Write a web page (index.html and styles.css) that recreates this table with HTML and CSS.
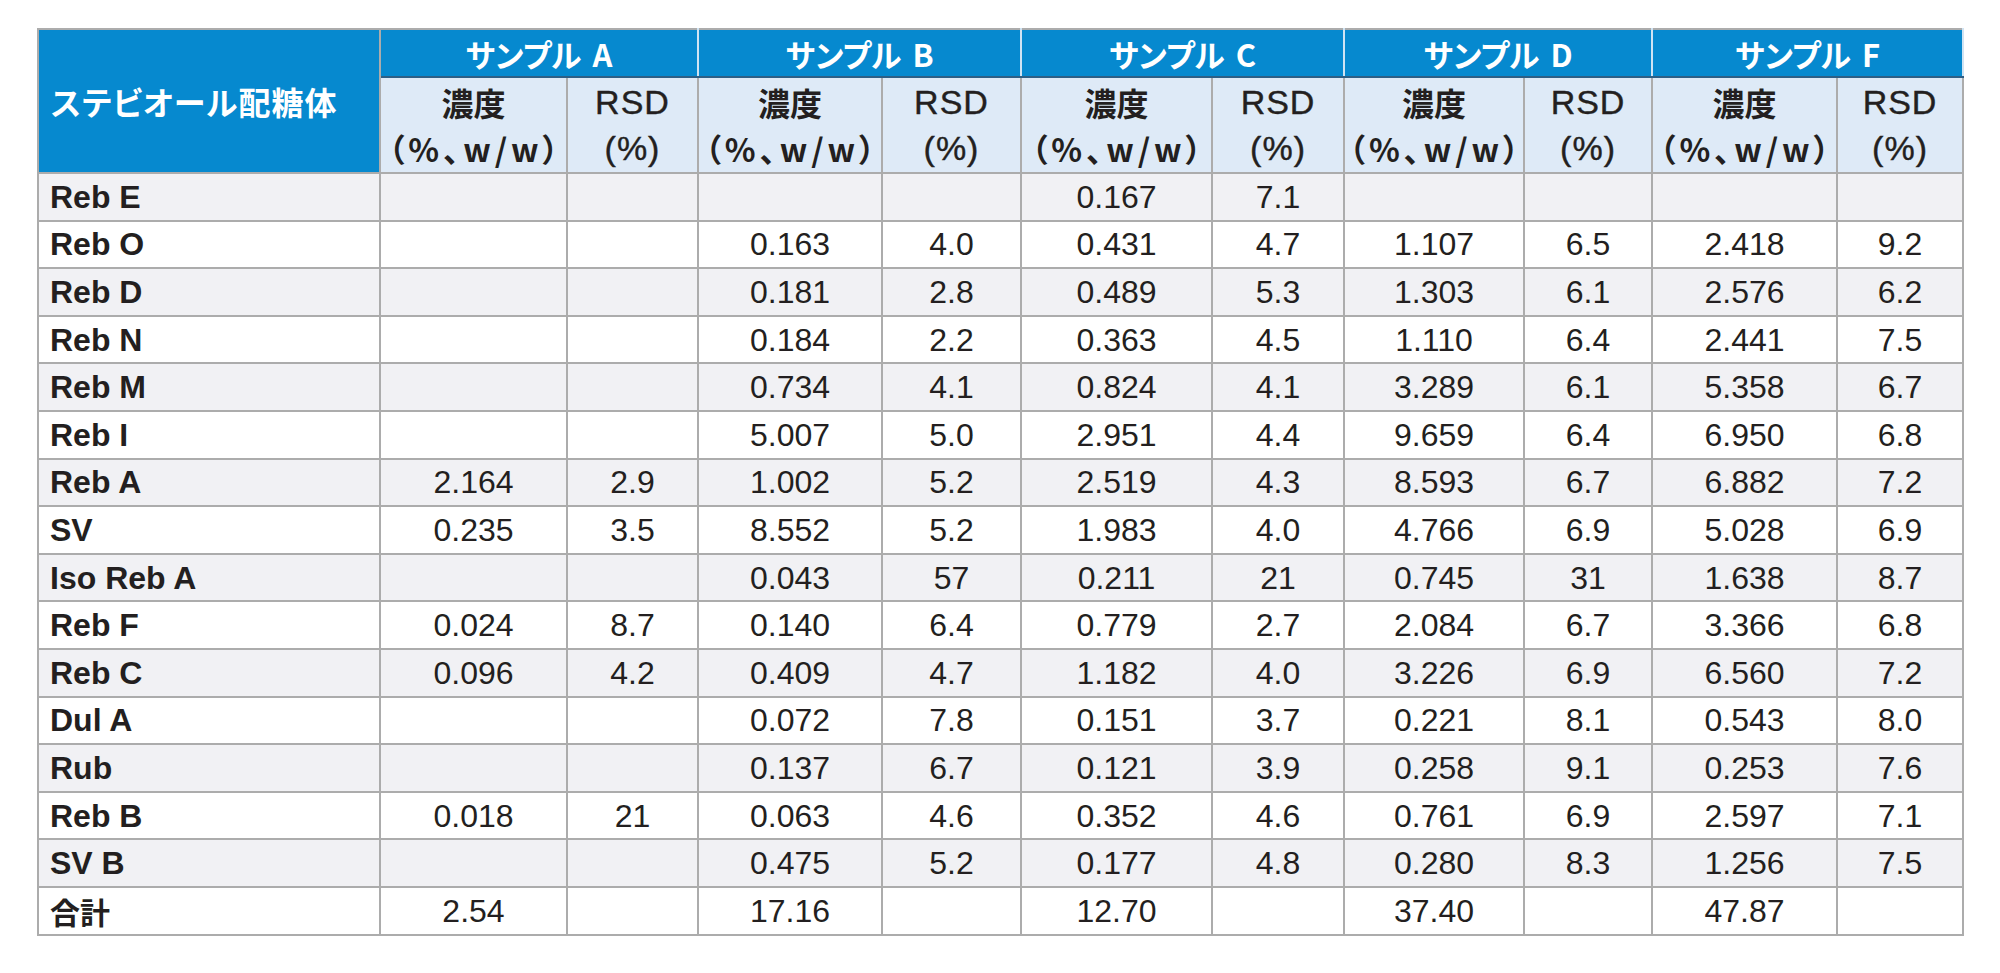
FILE: index.html
```html
<!DOCTYPE html>
<html lang="ja">
<head>
<meta charset="utf-8">
<title>ステビオール配糖体</title>
<link rel="stylesheet" href="styles.css">
</head>
<body>
<div class="page">
<table class="data">
<colgroup>
<col class="c-name"><col class="c-a1"><col class="c-a2"><col class="c-b1"><col class="c-b2"><col class="c-c1"><col class="c-c2"><col class="c-d1"><col class="c-d2"><col class="c-f1"><col class="c-f2">
</colgroup>
<thead>
<tr class="h1">
<th class="corner" rowspan="2">ステビオール配糖体</th>
<th class="sample" colspan="2">サンプル A</th>
<th class="sample" colspan="2">サンプル B</th>
<th class="sample" colspan="2">サンプル C</th>
<th class="sample" colspan="2">サンプル D</th>
<th class="sample" colspan="2">サンプル F</th>
</tr>
<tr class="h2">
<th class="sub"><span class="jp">濃度</span><br><span class="unit">（%、w/w）</span></th><th class="sub rsd">RSD<br>(%)</th>
<th class="sub"><span class="jp">濃度</span><br><span class="unit">（%、w/w）</span></th><th class="sub rsd">RSD<br>(%)</th>
<th class="sub"><span class="jp">濃度</span><br><span class="unit">（%、w/w）</span></th><th class="sub rsd">RSD<br>(%)</th>
<th class="sub"><span class="jp">濃度</span><br><span class="unit">（%、w/w）</span></th><th class="sub rsd">RSD<br>(%)</th>
<th class="sub"><span class="jp">濃度</span><br><span class="unit">（%、w/w）</span></th><th class="sub rsd">RSD<br>(%)</th>
</tr>
</thead>
<tbody>
<tr><th>Reb E</th><td></td><td></td><td></td><td></td><td>0.167</td><td>7.1</td><td></td><td></td><td></td><td></td></tr>
<tr><th>Reb O</th><td></td><td></td><td>0.163</td><td>4.0</td><td>0.431</td><td>4.7</td><td>1.107</td><td>6.5</td><td>2.418</td><td>9.2</td></tr>
<tr><th>Reb D</th><td></td><td></td><td>0.181</td><td>2.8</td><td>0.489</td><td>5.3</td><td>1.303</td><td>6.1</td><td>2.576</td><td>6.2</td></tr>
<tr><th>Reb N</th><td></td><td></td><td>0.184</td><td>2.2</td><td>0.363</td><td>4.5</td><td>1.110</td><td>6.4</td><td>2.441</td><td>7.5</td></tr>
<tr><th>Reb M</th><td></td><td></td><td>0.734</td><td>4.1</td><td>0.824</td><td>4.1</td><td>3.289</td><td>6.1</td><td>5.358</td><td>6.7</td></tr>
<tr><th>Reb I</th><td></td><td></td><td>5.007</td><td>5.0</td><td>2.951</td><td>4.4</td><td>9.659</td><td>6.4</td><td>6.950</td><td>6.8</td></tr>
<tr><th>Reb A</th><td>2.164</td><td>2.9</td><td>1.002</td><td>5.2</td><td>2.519</td><td>4.3</td><td>8.593</td><td>6.7</td><td>6.882</td><td>7.2</td></tr>
<tr><th>SV</th><td>0.235</td><td>3.5</td><td>8.552</td><td>5.2</td><td>1.983</td><td>4.0</td><td>4.766</td><td>6.9</td><td>5.028</td><td>6.9</td></tr>
<tr><th>Iso Reb A</th><td></td><td></td><td>0.043</td><td>57</td><td>0.211</td><td>21</td><td>0.745</td><td>31</td><td>1.638</td><td>8.7</td></tr>
<tr><th>Reb F</th><td>0.024</td><td>8.7</td><td>0.140</td><td>6.4</td><td>0.779</td><td>2.7</td><td>2.084</td><td>6.7</td><td>3.366</td><td>6.8</td></tr>
<tr><th>Reb C</th><td>0.096</td><td>4.2</td><td>0.409</td><td>4.7</td><td>1.182</td><td>4.0</td><td>3.226</td><td>6.9</td><td>6.560</td><td>7.2</td></tr>
<tr><th>Dul A</th><td></td><td></td><td>0.072</td><td>7.8</td><td>0.151</td><td>3.7</td><td>0.221</td><td>8.1</td><td>0.543</td><td>8.0</td></tr>
<tr><th>Rub</th><td></td><td></td><td>0.137</td><td>6.7</td><td>0.121</td><td>3.9</td><td>0.258</td><td>9.1</td><td>0.253</td><td>7.6</td></tr>
<tr><th>Reb B</th><td>0.018</td><td>21</td><td>0.063</td><td>4.6</td><td>0.352</td><td>4.6</td><td>0.761</td><td>6.9</td><td>2.597</td><td>7.1</td></tr>
<tr><th>SV B</th><td></td><td></td><td>0.475</td><td>5.2</td><td>0.177</td><td>4.8</td><td>0.280</td><td>8.3</td><td>1.256</td><td>7.5</td></tr>
<tr><th class="jp-name">合計</th><td>2.54</td><td></td><td>17.16</td><td></td><td>12.70</td><td></td><td>37.40</td><td></td><td>47.87</td><td></td></tr>
</tbody>
</table>
</div>
</body>
</html>
```

FILE: styles.css
```css
html, body {
  margin: 0;
  padding: 0;
  background: #ffffff;
}

.page {
  padding: 28px 0 0 37px;
}

.data {
  border-collapse: collapse;
  table-layout: fixed;
  width: 1925px;
  font-family: "Liberation Sans", "Noto Sans CJK JP", sans-serif;
  color: #231f20;
  font-size: 32px;
}

.c-name { width: 342px; }
.c-a1 { width: 187px; }
.c-a2 { width: 131px; }
.c-b1 { width: 184px; }
.c-b2 { width: 139px; }
.c-c1 { width: 191px; }
.c-c2 { width: 132px; }
.c-d1 { width: 180px; }
.c-d2 { width: 128px; }
.c-f1 { width: 185px; }
.c-f2 { width: 126px; }

.data th,
.data td {
  border: 2px solid #acacac;
  padding: 0;
  line-height: 1;
}

.data thead th {
  font-family: "Noto Sans CJK JP", "Liberation Sans", sans-serif;
  font-feature-settings: "palt";
}

.h1 {
  height: 48px;
}

.h2 {
  height: 96px;
}

.corner {
  background: #0689cf;
  color: #ffffff;
  text-align: left;
  padding-left: 12px !important;
  font-size: 32px;
  font-weight: 700;
  letter-spacing: 1px;
  vertical-align: middle;
}

.sample {
  background: #0689cf;
  color: #ffffff;
  font-size: 31px;
  font-weight: 700;
  text-align: center;
  vertical-align: middle;
  border-left-color: #cfe3f3 !important;
  border-right-color: #cfe3f3 !important;
  border-bottom-color: #2d5f86 !important;
  word-spacing: 4px;
}

.sub {
  background: #deeaf7;
  text-align: center;
  vertical-align: middle;
  font-size: 32px;
  line-height: 46px !important;
  font-weight: 700;
}

.unit {
  font-weight: 700;
  letter-spacing: 4px;
  margin-right: -4px;
}

.sub.rsd {
  font-family: "Liberation Sans", sans-serif !important;
  font-weight: 400;
  font-size: 34px;
  -webkit-text-stroke: 0.4px #231f20;
  letter-spacing: 1px;
}

.data tbody tr {
  height: 47.6px;
}

.data tbody tr:nth-child(odd) {
  background: #f1f1f4;
}

.data tbody tr:nth-child(even) {
  background: #ffffff;
}

.data tbody th {
  text-align: left;
  font-weight: 700;
  padding-left: 11px;
  font-size: 32px;
  white-space: nowrap;
}

.data tbody th.jp-name {
  font-family: "Noto Sans CJK JP", sans-serif;
  font-size: 30px;
}

.data tbody td {
  text-align: center;
  font-weight: 400;
}
```
